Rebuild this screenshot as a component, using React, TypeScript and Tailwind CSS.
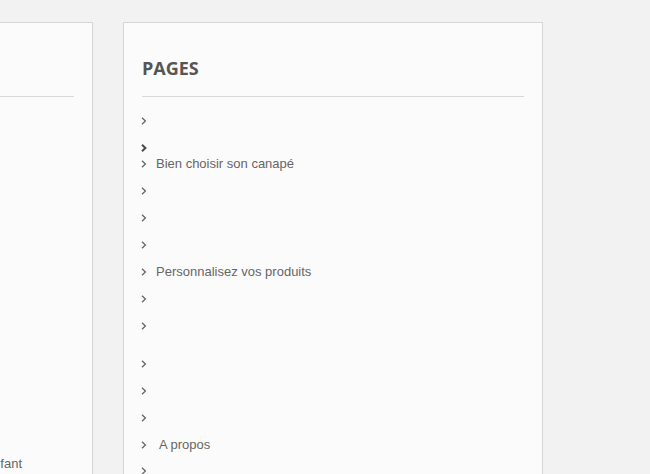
import React from "react";

const Chevron = ({ bold = false }: { bold?: boolean }) => (
  <svg
    width="6"
    height="8"
    viewBox="0 0 6 8"
    className="shrink-0"
    fill="none"
    stroke={bold ? "#4a4a4a" : "#666"}
    strokeWidth={bold ? 2 : 1.3}
    strokeLinecap="butt"
    strokeLinejoin="miter"
  >
    <polyline points="1,0.8 4.4,4 1,7.2" />
  </svg>
);

type Item = { text?: string; bold?: boolean; mb: string; pre?: boolean };

const items: Item[] = [
  { mb: "mb-[11px]" },
  { mb: "mb-0", bold: true },
  { text: "Bien choisir son canapé", mb: "mb-[11px]" },
  { mb: "mb-[11px]" },
  { mb: "mb-[11px]" },
  { mb: "mb-[11px]" },
  { text: "Personnalisez vos produits", mb: "mb-[11px]" },
  { mb: "mb-[11px]" },
  { mb: "mb-[22px]" },
  { mb: "mb-[11px]" },
  { mb: "mb-[11px]" },
  { mb: "mb-[11px]" },
  { text: " A propos", mb: "mb-[10px]", pre: true },
  { mb: "mb-[11px]" },
  { mb: "mb-[11px]" },
];

export default function App() {
  return (
    <div
      className="w-[650px] h-[474px] overflow-hidden bg-[#f2f2f2] flex gap-[30px] pt-[22px]"
      style={{ fontFamily: '"Liberation Sans", Arial, sans-serif' }}
    >
      {/* Left panel (mostly off-screen) */}
      <div className="w-[420px] ml-[-327px] shrink-0 bg-[#fbfbfb] border border-[#d6d6d6] px-[18px] pt-[33px] h-[600px]">
        <div className="h-[41px] border-b border-[#d8d8d8]" />
        <div className="h-[359px]" />
        <div className="flex justify-end pr-[52px] text-[13px] leading-[16px] text-[#666]">
          Chambre enfant
        </div>
      </div>

      {/* Right panel: PAGES */}
      <div className="w-[420px] shrink-0 bg-[#fbfbfb] border border-[#d6d6d6] px-[18px] pt-[33px] h-[600px]">
        <h2
          className="text-[18px] leading-[24px] font-bold text-[#555] pb-[16px] border-b border-[#d8d8d8]"
          style={{ fontFamily: '"Open Sans", sans-serif' }}
        >
          PAGES
        </h2>
        <ul className="mt-[16px]">
          {items.map((it, i) => (
            <li
              key={i}
              className={`flex items-center h-[16px] ml-[-1px] ${it.mb}`}
            >
              <Chevron bold={it.bold} />
              {it.text && (
                <span
                  className={`ml-[9px] text-[13px] leading-[16px] text-[#666] ${
                    it.pre ? "whitespace-pre" : ""
                  }`}
                >
                  {it.text}
                </span>
              )}
            </li>
          ))}
        </ul>
      </div>
    </div>
  );
}
